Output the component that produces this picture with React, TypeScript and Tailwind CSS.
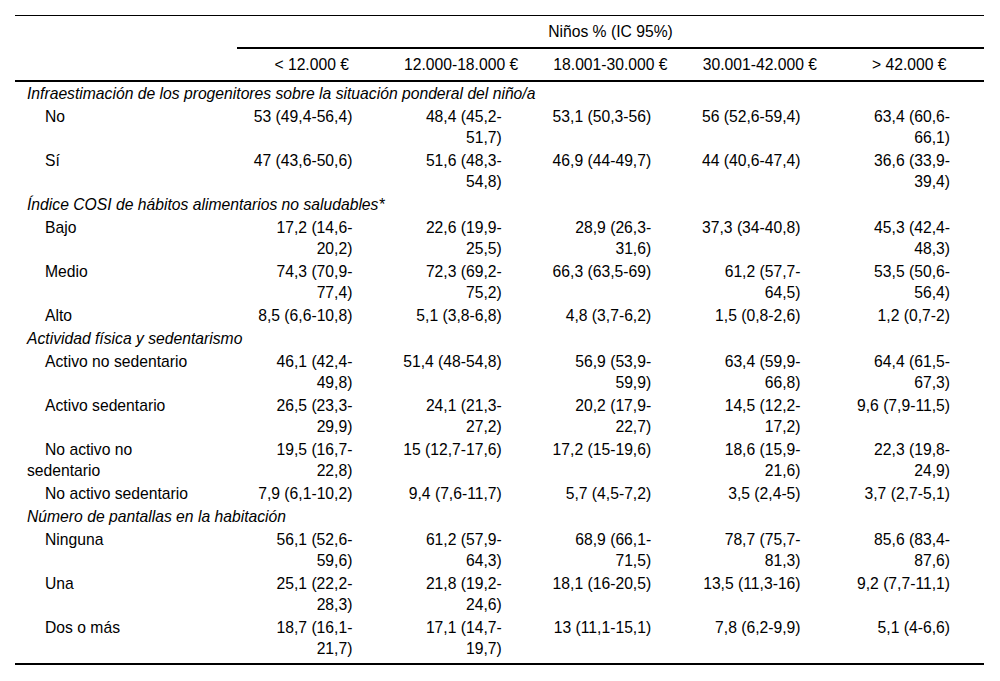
import React from "react";

type Row = { label: string; values: string[] };
type Group = { title: string; rows: Row[] };

const groups: Group[] = [
  {
    title: "Infraestimación de los progenitores sobre la situación ponderal del niño/a",
    rows: [
      { label: "No", values: ["53 (49,4-56,4)", "48,4 (45,2-51,7)", "53,1 (50,3-56)", "56 (52,6-59,4)", "63,4 (60,6-66,1)"] },
      { label: "Sí", values: ["47 (43,6-50,6)", "51,6 (48,3-54,8)", "46,9 (44-49,7)", "44 (40,6-47,4)", "36,6 (33,9-39,4)"] },
    ],
  },
  {
    title: "Índice COSI de hábitos alimentarios no saludables*",
    rows: [
      { label: "Bajo", values: ["17,2 (14,6-20,2)", "22,6 (19,9-25,5)", "28,9 (26,3-31,6)", "37,3 (34-40,8)", "45,3 (42,4-48,3)"] },
      { label: "Medio", values: ["74,3 (70,9-77,4)", "72,3 (69,2-75,2)", "66,3 (63,5-69)", "61,2 (57,7-64,5)", "53,5 (50,6-56,4)"] },
      { label: "Alto", values: ["8,5 (6,6-10,8)", "5,1 (3,8-6,8)", "4,8 (3,7-6,2)", "1,5 (0,8-2,6)", "1,2 (0,7-2)"] },
    ],
  },
  {
    title: "Actividad física y sedentarismo",
    rows: [
      { label: "Activo no sedentario", values: ["46,1 (42,4-49,8)", "51,4 (48-54,8)", "56,9 (53,9-59,9)", "63,4 (59,9-66,8)", "64,4 (61,5-67,3)"] },
      { label: "Activo sedentario", values: ["26,5 (23,3-29,9)", "24,1 (21,3-27,2)", "20,2 (17,9-22,7)", "14,5 (12,2-17,2)", "9,6 (7,9-11,5)"] },
      { label: "No activo no sedentario", values: ["19,5 (16,7-22,8)", "15 (12,7-17,6)", "17,2 (15-19,6)", "18,6 (15,9-21,6)", "22,3 (19,8-24,9)"] },
      { label: "No activo sedentario", values: ["7,9 (6,1-10,2)", "9,4 (7,6-11,7)", "5,7 (4,5-7,2)", "3,5 (2,4-5)", "3,7 (2,7-5,1)"] },
    ],
  },
  {
    title: "Número de pantallas en la habitación",
    rows: [
      { label: "Ninguna", values: ["56,1 (52,6-59,6)", "61,2 (57,9-64,3)", "68,9 (66,1-71,5)", "78,7 (75,7-81,3)", "85,6 (83,4-87,6)"] },
      { label: "Una", values: ["25,1 (22,2-28,3)", "21,8 (19,2-24,6)", "18,1 (16-20,5)", "13,5 (11,3-16)", "9,2 (7,7-11,1)"] },
      { label: "Dos o más", values: ["18,7 (16,1-21,7)", "17,1 (14,7-19,7)", "13 (11,1-15,1)", "7,8 (6,2-9,9)", "5,1 (4-6,6)"] },
    ],
  },
];

const headers = ["< 12.000 €", "12.000-18.000 €", "18.001-30.000 €", "30.001-42.000 €", "> 42.000 €"];

function Val({ text }: { text: string }) {
  const parts = text.split("-");
  return (
    <>
      {parts.map((p, i) => (
        <React.Fragment key={i}>
          {p}
          {i < parts.length - 1 ? (
            <>
              -<wbr />
            </>
          ) : null}
        </React.Fragment>
      ))}
    </>
  );
}

export default function App() {
  const lastGroup = groups.length - 1;
  return (
    <div className="min-h-[681px] bg-white pt-[15px] pl-[15px] font-['Liberation_Sans',Arial,sans-serif] text-[15.7px] leading-[21px] text-black">
      <table className="w-[969px] table-fixed border-collapse">
        <colgroup>
          <col className="w-[222px]" />
          <col />
          <col />
          <col />
          <col />
          <col />
        </colgroup>
        <thead>
          <tr>
            <th className="border-t border-black py-[5px] font-normal"></th>
            <th colSpan={5} className="border-t border-b-2 border-black py-[5px] text-center font-normal">
              Niños % (IC 95%)
            </th>
          </tr>
          <tr className="border-b-2 border-black">
            <th className="py-[5px] font-normal"></th>
            {headers.map((h) => (
              <th key={h} className="py-[5px] text-center font-normal">
                {h}
              </th>
            ))}
          </tr>
        </thead>
        <tbody>
          {groups.map((g, gi) => (
            <React.Fragment key={g.title}>
              <tr>
                <td colSpan={6} className="py-px pl-[12px] italic">
                  {g.title}
                </td>
              </tr>
              {g.rows.map((r, ri) => {
                const last = gi === lastGroup && ri === g.rows.length - 1;
                return (
                  <tr key={r.label} className={last ? "border-b-2 border-black" : ""}>
                    <td className={`pl-[12px] pr-[38px] indent-[18px] align-top ${last ? "pt-px pb-[4px]" : "py-px"}`}>
                      {r.label}
                    </td>
                    {r.values.map((v, vi) => (
                      <td
                        key={vi}
                        className={`pl-[11px] pr-[34px] text-right align-top ${last ? "pt-px pb-[4px]" : "py-px"}`}
                      >
                        <Val text={v} />
                      </td>
                    ))}
                  </tr>
                );
              })}
            </React.Fragment>
          ))}
        </tbody>
      </table>
    </div>
  );
}
